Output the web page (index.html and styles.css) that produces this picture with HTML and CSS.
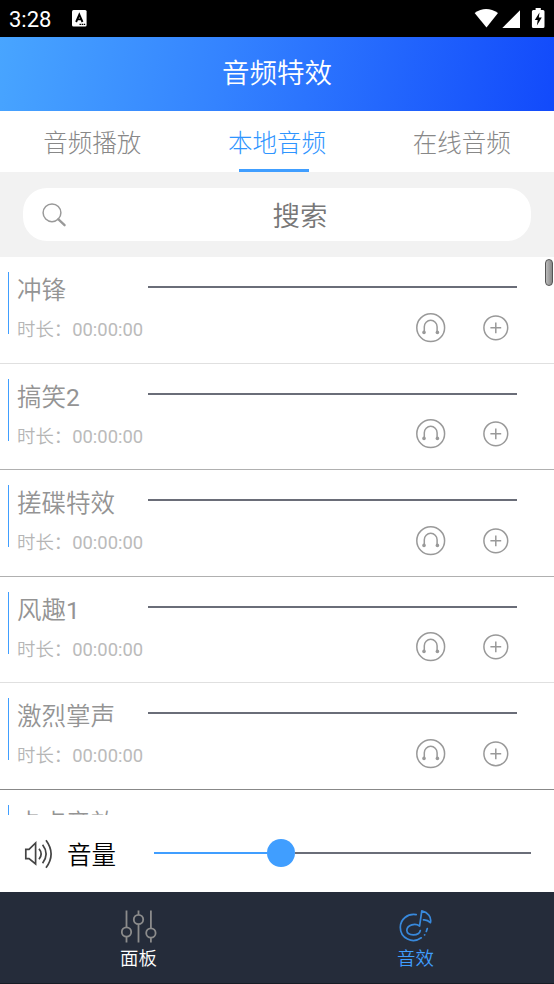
FILE: index.html
```html
<!DOCTYPE html>
<html lang="zh-CN">
<head>
<meta charset="utf-8">
<title>音频特效</title>
<link rel="stylesheet" href="styles.css">
</head>
<body>
<svg width="0" height="0" class="defs">
  <symbol id="headphone" viewBox="0 0 30 30"><circle cx="14.700" cy="14.700" r="13.900"/><path d="M8.300 19V13.700a6.400 6.400 0 0 1 12.800 0V19"/><circle class="dot" cx="8" cy="19.400" r="1.800"/><circle class="dot" cx="21.400" cy="19.400" r="1.800"/></symbol>
  <symbol id="plus" viewBox="0 0 26 26"><circle cx="12.800" cy="12.800" r="11.900"/><path d="M12.800 7.400v10.800M7.400 12.800h10.800"/></symbol>
</svg>
<div class="status">
  <span class="time">3:28</span>
  <svg class="ime" width="15" height="17" viewBox="0 0 15 17"><rect width="14.600" height="16.400" rx="1.500" fill="#fff"/><path d="M4.100 12L7.300 4.600 10.500 12M5.200 9.400h4.200" fill="none" stroke="#000" stroke-width="1.900"/><path d="M7.500 14.400h5.800" stroke="#000" stroke-width="1.200" stroke-dasharray="1.500 .6"/></svg>
  <svg class="sys" width="72" height="22" viewBox="0 0 72 22"><path d="M.6 5.100Q12 -3.100 24 5.100L12.500 19.500Z" fill="#fff"/><path d="M28.300 20L46 2.200V20Z" fill="#fff"/><path d="M59.400 2h2.200V0h5.200v2h2.200q1.500 0 1.500 1.500v15q0 1.500-1.500 1.500h-9.600q-1.500 0-1.500-1.500v-15q0-1.500 1.500-1.500z" fill="#fff"/><path d="M65.500 4.500L60.800 12h2.900l-.8 5.600 4.900-8h-3z" fill="#000"/></svg>
</div>
<header class="title">音频特效</header>
<nav class="tabs">
  <span class="tab">音频播放</span>
  <span class="tab active">本地音频</span>
  <span class="tab">在线音频</span>
</nav>
<div class="search-area">
  <div class="search">
    <svg width="26" height="26" viewBox="0 0 26 26" fill="none" stroke="#999"><circle cx="11" cy="10.800" r="8.900" stroke-width="1.500"/><path d="M17.200 17.200l6.400 6" stroke-width="2.300" stroke-linecap="round"/></svg>
    <span class="placeholder">搜索</span>
  </div>
</div>
<main class="list">
  <div class="scrollbar"></div>
  <section class="row soft"><div class="info"><div class="name">冲锋</div><div class="duration">时长：<span>00:00:00</span></div></div><div class="side"><div class="track"></div><div class="actions"><svg class="hp"><use href="#headphone"/></svg><svg class="add"><use href="#plus"/></svg></div></div></section>
  <section class="row"><div class="info"><div class="name">搞笑<span>2</span></div><div class="duration">时长：<span>00:00:00</span></div></div><div class="side"><div class="track"></div><div class="actions"><svg class="hp"><use href="#headphone"/></svg><svg class="add"><use href="#plus"/></svg></div></div></section>
  <section class="row"><div class="info"><div class="name">搓碟特效</div><div class="duration">时长：<span>00:00:00</span></div></div><div class="side"><div class="track"></div><div class="actions"><svg class="hp"><use href="#headphone"/></svg><svg class="add"><use href="#plus"/></svg></div></div></section>
  <section class="row soft"><div class="info"><div class="name">风趣<span>1</span></div><div class="duration">时长：<span>00:00:00</span></div></div><div class="side"><div class="track"></div><div class="actions"><svg class="hp"><use href="#headphone"/></svg><svg class="add"><use href="#plus"/></svg></div></div></section>
  <section class="row strong"><div class="info"><div class="name">激烈掌声</div><div class="duration">时长：<span>00:00:00</span></div></div><div class="side"><div class="track"></div><div class="actions"><svg class="hp"><use href="#headphone"/></svg><svg class="add"><use href="#plus"/></svg></div></div></section>
  <section class="row"><div class="info"><div class="name">卡点音效</div></div></section>
</main>
<div class="volume">
  <svg width="30" height="30" viewBox="0 0 30 30" fill="none" stroke="#444" stroke-width="1.700"><path d="M1.800 10.300H5L11.600 4V25L5 19.600H1.800Z"/><path d="M15 9.800q4.300 5.200 0 10.400M18.600 5.800q7 9.200 0 18.400M22 1.200q10.200 13.800 0 27.600"/></svg>
  <span class="volume-label">音量</span>
  <div class="slider"><div class="fill"></div><div class="thumb"></div><div class="rest"></div></div>
</div>
<footer class="bottom">
  <div class="item"><svg width="36" height="34" viewBox="0 0 36 34" fill="none" stroke="#8c8c8c" stroke-width="1.800"><path d="M5.500 .6v16.500M5.500 27v5.600M17.500 .6v4M17.500 14.300V32.600M29.900 .6v17.500M29.900 28v4.600"/><circle cx="5.500" cy="22" r="4.700"/><circle cx="17.500" cy="9.500" r="4.700"/><circle cx="29.900" cy="23" r="4.700"/></svg><span>面板</span></div>
  <div class="item active"><svg width="36" height="34" viewBox="0 0 36 34" fill="none" stroke="#3889dc" stroke-width="1.700" stroke-linecap="round" stroke-linejoin="round"><path d="M18.200 4.700C9.500 3.200 2.300 9.500 2.300 17.300C2.300 28.500 14.500 34 23.300 27.800"/><path d="M21.600 16C17.500 13 9.200 14.500 8.800 20.300C9.200 26.400 21 26.500 22.300 20.500M21.600 16L23.800.9C30 2.400 33.800 7.300 32.400 12.700C30 10.200 28 9.700 25.500 9.900M29.300 18.500l-1 3M26.700 24.800l-.1.100"/></svg><span>音效</span></div>
</footer>
</body>
</html>
```
FILE: styles.css
```css
* { box-sizing: border-box; }
body {
  margin: 0;
  width: 554px;
  height: 984px;
  overflow: hidden;
  display: flex;
  flex-direction: column;
  background: #fff;
  font-family: Roboto, "Noto Sans CJK SC", sans-serif;
  font-weight: 350;
}
svg { display: block; flex: none; }
.defs { display: none; }
.status {
  height: 37px;
  flex: none;
  background: #000;
  color: #fff;
  display: flex;
  align-items: center;
  padding: 0 8px 0 9px;
}
.time { font-size: 22px; width: 63px; font-weight: 400; line-height: 37px; padding-top: 2px; }
.sys { margin-left: auto; }
.title {
  height: 74px;
  flex: none;
  background: linear-gradient(100deg, #48a5ff, #3483ff 40%, #124afb);
  color: #fff;
  font-size: 27.500px;
  line-height: 74px;
  text-align: center;
}
.tabs { height: 61px; flex: none; display: flex; }
.tab {
  flex: 1;
  display: flex;
  flex-direction: column;
  align-items: center;
  font-size: 24.500px;
  font-weight: 300;
  line-height: 66px;
  color: #888;
}
.tab.active { color: #2f95ff; }
.tab.active::after {
  content: "";
  width: 70px;
  height: 3px;
  margin-top: -8px;
  margin-right: 7px;
  background: #409eff;
}
.search-area { height: 85px; flex: none; background: #f2f2f2; padding: 16px 23px; }
.search {
  height: 53px;
  border-radius: 24px;
  background: #fff;
  display: flex;
  align-items: center;
  padding: 0 0 0 18px;
}
.placeholder { flex: 1; text-align: center; color: #777; font-size: 27.500px; line-height: 53px; padding: 3px 0 0 2px; }
.list { position: relative; height: 558px; flex: none; overflow: hidden; }
.scrollbar {
  position: absolute;
  right: 1px;
  top: 2px;
  width: 8px;
  height: 27px;
  border: 1.500px solid #555;
  border-radius: 4px;
  background: linear-gradient(90deg, #bbb, #888);
}
.row {
  height: 106.600px;
  border-bottom: 1px solid #b0b0b0;
  padding: 15px 37px 0 8px;
  display: flex;
}
.row.soft { border-color: #e0e0e0; }
.row.strong { border-color: #888; }
.info { width: 140px; height: 62px; border-left: 1px solid #409eff; padding-left: 8px; white-space: nowrap; }
.name { font-size: 24.500px; line-height: 38px; height: 44px; color: #949494; }
.duration { font-size: 18.400px; line-height: 28px; color: #b5b5b5; }
.name span, .duration span { font-weight: 400; }
.duration span { color: #bbb; }
.side { flex: 1; padding-top: 14px; }
.track { height: 2px; background: #6a6d78; }
.actions { display: flex; align-items: center; justify-content: flex-end; gap: 37px; padding-right: 8px; margin-top: 24.500px; }
.actions svg { fill: none; stroke: #999; stroke-width: 1.500; }
.dot { fill: #999; stroke: none; }
.hp { width: 30px; height: 30px; }
.add { width: 26px; height: 26px; }
.volume { height: 77px; flex: none; display: flex; align-items: center; padding: 0 23px 0 24px; }
.volume-label { font-size: 24.500px; width: 87px; margin-left: 13px; color: #000; }
.slider { flex: 1; display: flex; align-items: center; margin-top: -2px; }
.fill { width: 113px; height: 2px; background: #409eff; }
.thumb { width: 28px; height: 28px; border-radius: 50%; background: #409eff; }
.rest { flex: 1; height: 2px; background: #6a6d78; }
.bottom { height: 92px; flex: none; background: #252c3a; border-bottom: 1px solid #171c25; display: flex; }
.item { flex: 1; display: flex; flex-direction: column; align-items: center; padding-top: 18px; color: #fff; font-size: 18.400px; line-height: 29px; }
.item.active { color: #409eff; }
```
